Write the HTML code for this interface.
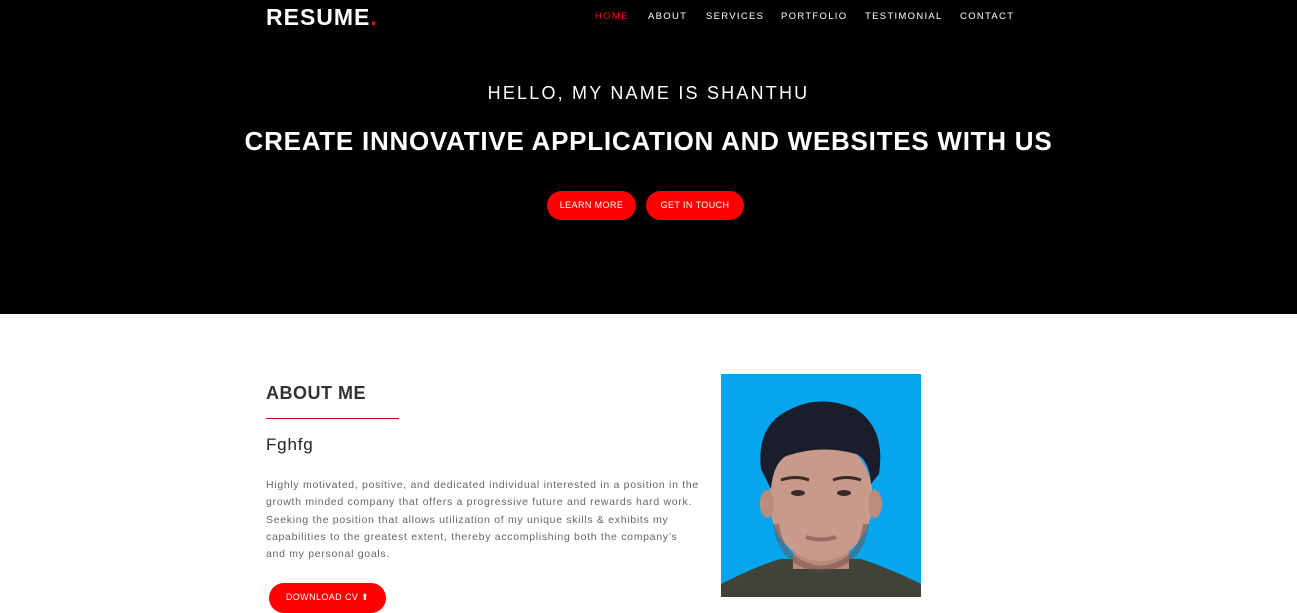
<!DOCTYPE html>
<html><head><meta charset="utf-8"><style>
*{margin:0;padding:0;box-sizing:border-box}
body{width:1297px;height:597px;overflow:hidden;background:#fff;font-family:"Liberation Sans",sans-serif}
.hero{position:absolute;left:0;top:0;width:1297px;height:314px;background:#000}
.logo{position:absolute;left:266px;top:4px;color:#fff;font-weight:bold;font-size:23px;letter-spacing:1px}
.logo span{color:#f00}
.nav{position:absolute;top:11px;font-size:9.5px;letter-spacing:1.3px;color:#fff}
h2.hello{position:absolute;top:83px;width:100%;text-align:center;color:#fff;font-weight:normal;font-size:18px;letter-spacing:2.2px}
h1{position:absolute;top:126px;width:100%;text-align:center;color:#fff;font-size:26px;font-weight:bold;letter-spacing:0.75px}
.btn{position:absolute;background:#f00;color:#fff;font-size:9px;border-radius:15px;text-align:center;line-height:29px;height:29px;letter-spacing:0.4px}
.ab{position:absolute;left:266px;top:383px;font-size:18px;font-weight:bold;color:#333;letter-spacing:0.5px}
.line{position:absolute;left:266px;top:418px;width:133px;height:1px;background:#c00}
.f{position:absolute;left:266px;top:435px;font-size:17px;color:#222;letter-spacing:0.8px}
.p{position:absolute;left:266px;top:477px;white-space:nowrap;font-size:10.5px;line-height:17.3px;color:#666;letter-spacing:0.7px}
</style></head><body>
<div class="hero">
<div class="logo">RESUME<span>.</span></div>
<div class="nav" style="left:595px;color:#f00">HOME</div>
<div class="nav" style="left:648px">ABOUT</div>
<div class="nav" style="left:706px">SERVICES</div>
<div class="nav" style="left:781px">PORTFOLIO</div>
<div class="nav" style="left:865px">TESTIMONIAL</div>
<div class="nav" style="left:960px">CONTACT</div>
<h2 class="hello">HELLO, MY NAME IS SHANTHU</h2>
<h1>CREATE INNOVATIVE APPLICATION AND WEBSITES WITH US</h1>
<div class="btn" style="left:547px;top:191px;width:89px">LEARN MORE</div>
<div class="btn" style="left:646px;top:191px;width:98px">GET IN TOUCH</div>
</div>
<div class="ab">ABOUT ME</div>
<div class="line"></div>
<div class="f">Fghfg</div>
<div class="p">Highly motivated, positive, and dedicated individual interested in a position in the<br>growth minded company that offers a progressive future and rewards hard work.<br>Seeking the position that allows utilization of my unique skills &amp; exhibits my<br>capabilities to the greatest extent, thereby accomplishing both the company’s<br>and my personal goals.</div>
<div class="btn" style="left:269px;top:583px;width:117px;height:30px;font-size:9px">DOWNLOAD CV ⬆</div>
<svg style="position:absolute;left:721px;top:374px" width="200" height="223" viewBox="0 0 200 223">
<rect width="200" height="223" fill="#06a6ee"/>
<path d="M0 210 Q40 190 60 185 L140 185 Q170 195 200 210 L200 223 L0 223Z" fill="#3f4338"/>
<rect x="72" y="160" width="56" height="35" fill="#b9897a"/>
<ellipse cx="100" cy="125" rx="52" ry="62" fill="#c79a8c"/>
<ellipse cx="46" cy="130" rx="7" ry="14" fill="#bd8c7c"/>
<ellipse cx="154" cy="130" rx="7" ry="14" fill="#bd8c7c"/>
<path d="M40 95 Q35 50 70 35 Q100 20 135 35 Q165 55 158 100 L150 110 Q148 85 135 80 Q100 70 65 82 Q52 90 50 115Z" fill="#1a1d2a"/>
<path d="M60 106 Q75 101 88 106 M112 106 Q125 101 140 106" stroke="#3a2a26" stroke-width="3" fill="none"/>
<ellipse cx="77" cy="119" rx="7" ry="3" fill="#3a2a26"/>
<ellipse cx="123" cy="119" rx="7" ry="3" fill="#3a2a26"/>
<path d="M55 150 Q60 190 100 195 Q140 190 145 150" stroke="#6d4e48" stroke-width="6" fill="none" opacity="0.5"/>
<path d="M85 163 Q100 168 115 163" stroke="#9b6a62" stroke-width="4" fill="none"/>
</svg>
</body></html>
